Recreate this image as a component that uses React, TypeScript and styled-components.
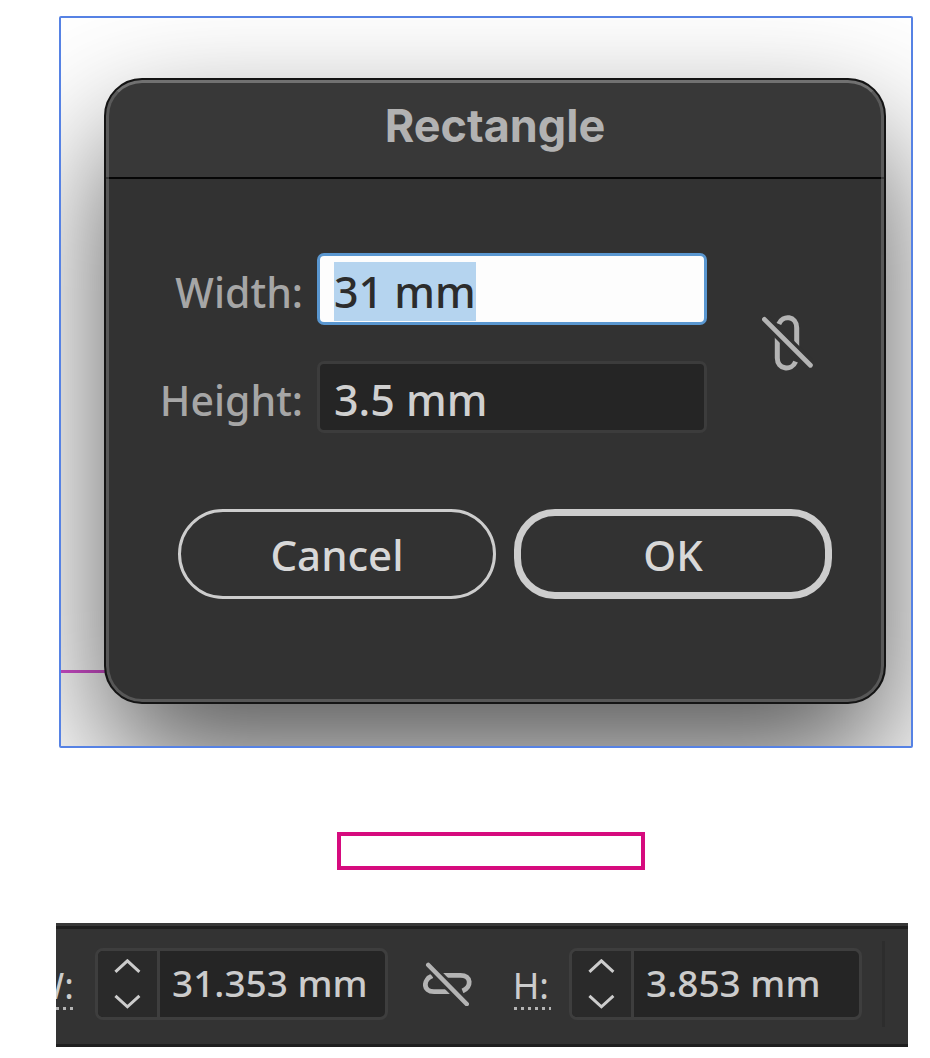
import React, { useEffect, useRef } from 'react';
import styled, { createGlobalStyle } from 'styled-components';

const GlobalStyle = createGlobalStyle`
  * { box-sizing: border-box; }
  body {
    margin: 0;
    background: #ffffff;
    font-family: 'Noto Sans', 'Open Sans', sans-serif;
  }
  button, input { font-family: inherit; margin: 0; }
`;

const Page = styled.main`
  display: flex;
  flex-direction: column;
  padding-top: 16px;
`;

const Frame = styled.section`
  position: relative;
  overflow: hidden;
  margin: 0 17px 0 59px;
  padding: 60px 25px 42px 43px;
  border: 2px solid #5682e4;
  border-radius: 2px;
  background: #ffffff;
`;

const GuideLine = styled.div`
  position: absolute;
  left: 0;
  bottom: 73px;
  width: 80px;
  height: 3px;
  background: #d44fd0;
`;

const Dialog = styled.form`
  position: relative;
  overflow: hidden;
  border: 2px solid #141414;
  border-radius: 38px;
  background: #323232;
  box-shadow: 0 60px 130px rgba(0, 0, 0, 0.66);

  &::after {
    content: '';
    position: absolute;
    inset: 0;
    border: 3px solid rgba(145, 145, 145, 0.4);
    border-top-color: rgba(170, 170, 170, 0.5);
    border-radius: 36px;
    pointer-events: none;
  }
`;

const TitleBar = styled.header`
  display: flex;
  align-items: center;
  justify-content: center;
  height: 99px;
  padding-bottom: 6px;
  border-bottom: 2px solid #060606;
  background: #383838;
`;

const Title = styled.h1`
  margin: 0;
  font-family: Inter, sans-serif;
  font-size: 45px;
  line-height: 52px;
  font-weight: 700;
  color: #b2b2b2;
`;

const Fields = styled.div`
  display: flex;
  align-items: center;
  gap: 55px;
  padding: 74px 71px 0 55px;
`;

const FieldColumn = styled.div`
  display: flex;
  flex: 1;
  flex-direction: column;
  gap: 36px;
`;

const Field = styled.div`
  display: grid;
  grid-template-columns: 142px minmax(0, 1fr);
  align-items: center;
  gap: 14px;
`;

const FieldLabel = styled.label`
  justify-self: end;
  padding-top: 6px;
  font-size: 41px;
  line-height: 52px;
  font-weight: 500;
  white-space: nowrap;
  color: #a6a6a6;
`;

const FieldInput = styled.input<{ $active?: boolean }>`
  width: 100%;
  height: 72px;
  padding: 9px 14px 5px;
  border: 3px solid ${(p) => (p.$active ? '#5a97d0' : '#3c3c3c')};
  border-radius: 7px;
  outline: none;
  background: ${(p) => (p.$active ? '#fdfdfd' : '#252525')};
  color: ${(p) => (p.$active ? '#2c2c2c' : '#d0d0d0')};
  font-size: 43px;
  line-height: 52px;
  font-weight: 500;

  &::selection {
    background: #b5d4ef;
    color: #2c2c2c;
  }
`;

const IconButton = styled.button`
  display: flex;
  flex: none;
  padding: 0;
  border: 0;
  background: none;
  color: #b4b4b4;
`;

const Actions = styled.div`
  display: grid;
  grid-template-columns: 1fr 1fr;
  gap: 18px;
  padding: 76px 52px 103px 72px;
`;

const ActionButton = styled.button<{ $primary?: boolean }>`
  height: 90px;
  padding: 2px 0 0;
  border: ${(p) => (p.$primary ? 7 : 3)}px solid #cdcdcd;
  border-radius: ${(p) => (p.$primary ? 41 : 45)}px;
  background: transparent;
  color: #d8d8d8;
  font-size: 42px;
  line-height: 52px;
  font-weight: 500;
`;

const Artboard = styled.div`
  display: flex;
  justify-content: center;
  padding: 84px 0 53px 52px;
`;

const DrawnRectangle = styled.div`
  width: 308px;
  height: 38px;
  border: 4px solid #d60b7e;
`;

const Toolbar = styled.section`
  display: flex;
  align-items: center;
  overflow: hidden;
  height: 124px;
  margin: 0 22px 11px 56px;
  padding: 0 23px 2px 0;
  background: linear-gradient(#383838 3px, #1f1f1f 3px, #1f1f1f 6px, transparent 6px),
    linear-gradient(to top, #1f1f1f 3px, #333333 3px);
`;

const ToolLabel = styled.label<{ $clipped?: boolean }>`
  display: flex;
  flex: none;
  justify-content: flex-end;
  width: ${(p) => (p.$clipped ? 20 : 37)}px;
  height: 44px;
  margin: 8px 0 0 ${(p) => (p.$clipped ? 0 : 42)}px;
  padding-right: 2px;
  background: repeating-linear-gradient(to right, #b4b4b4 0 3px, transparent 3px 7px) left bottom / 100% 3px
    no-repeat;
  font-size: 36px;
  line-height: 40px;
  color: #cccccc;
`;

const Spinner = styled.div<{ $left: number; $right: number }>`
  display: flex;
  flex: 1;
  overflow: hidden;
  height: 72px;
  margin: 0 ${(p) => p.$right}px 0 ${(p) => p.$left}px;
  border: 3px solid #3e3e3e;
  border-radius: 8px;
  background: #252525;
`;

const Stepper = styled.div`
  display: flex;
  flex: none;
  flex-direction: column;
  justify-content: space-between;
  width: 62px;
  border-right: 3px solid #3e3e3e;
  background: #2a2a2a;
`;

const StepButton = styled.button`
  display: flex;
  align-items: center;
  justify-content: center;
  height: 31px;
  padding: 0;
  border: 0;
  background: none;
  color: #cccccc;
`;

const SpinnerInput = styled.input`
  flex: 1;
  min-width: 0;
  padding: 0 12px 2px;
  border: 0;
  outline: none;
  background: transparent;
  color: #cccccc;
  font-size: 37px;
  line-height: 52px;
  font-weight: 500;
`;

const Separator = styled.div`
  flex: none;
  width: 3px;
  height: 86px;
  background: #2d2d2d;
`;

const UnlinkVertical = () => (
  <svg width="51" height="56" viewBox="0 0 51 56" fill="none" aria-hidden="true">
    <g stroke="currentColor" strokeWidth="5">
      <path d="M16.8 9 C20.5 -0.5 34.7 0.8 34.7 12.8 V32" />
      <path d="M15.3 21 V43 C15.3 54.5 29.5 56.5 33.6 46.6" />
    </g>
    <path d="M2.4 4.4 L48.4 50.2" stroke="#323232" strokeWidth="11.5" />
    <path d="M2.4 4.4 L48.4 50.2" stroke="currentColor" strokeWidth="4.8" strokeLinecap="round" />
  </svg>
);

const UnlinkHorizontal = () => (
  <svg width="49" height="44" viewBox="0 0 49 44" fill="none" aria-hidden="true">
    <g stroke="currentColor" strokeWidth="4.8">
      <path d="M16 13.3 H37.5 C48.5 13.3 49 25 39.5 29" />
      <path d="M9.3 13.8 C0 17.5 -0.5 29.7 11 29.7 H32" />
    </g>
    <path d="M5.3 3 L43.7 42" stroke="#333333" strokeWidth="10" />
    <path d="M5.3 3 L43.7 42" stroke="currentColor" strokeWidth="4.6" strokeLinecap="round" />
  </svg>
);

const Chevron = ({ up }: { up?: boolean }) => (
  <svg width="28" height="16" viewBox="0 0 28 16" fill="none" aria-hidden="true">
    <path d={up ? 'M1.4 12.8 L13.4 1.8 L25.4 12.8' : 'M1.4 1.8 L13.4 12.8 L25.4 1.8'} stroke="currentColor" strokeWidth="3" />
  </svg>
);

type NumberSpinnerProps = { id: string; value: string; left: number; right: number };

const NumberSpinner = ({ id, value, left, right }: NumberSpinnerProps) => (
  <Spinner $left={left} $right={right}>
    <Stepper>
      <StepButton type="button" aria-label="Increase">
        <Chevron up />
      </StepButton>
      <StepButton type="button" aria-label="Decrease">
        <Chevron />
      </StepButton>
    </Stepper>
    <SpinnerInput id={id} defaultValue={value} />
  </Spinner>
);

export default function App() {
  const widthRef = useRef<HTMLInputElement>(null);

  useEffect(() => {
    widthRef.current?.focus();
    widthRef.current?.select();
  }, []);

  return (
    <>
      <GlobalStyle />
      <Page>
        <Frame>
          <GuideLine />
          <Dialog onSubmit={(e) => e.preventDefault()}>
            <TitleBar>
              <Title>Rectangle</Title>
            </TitleBar>
            <Fields>
              <FieldColumn>
                <Field>
                  <FieldLabel htmlFor="rect-width">Width:</FieldLabel>
                  <FieldInput id="rect-width" ref={widthRef} $active defaultValue="31 mm" />
                </Field>
                <Field>
                  <FieldLabel htmlFor="rect-height">Height:</FieldLabel>
                  <FieldInput id="rect-height" defaultValue="3.5 mm" />
                </Field>
              </FieldColumn>
              <IconButton type="button" aria-label="Constrain proportions">
                <UnlinkVertical />
              </IconButton>
            </Fields>
            <Actions>
              <ActionButton type="button">Cancel</ActionButton>
              <ActionButton type="submit" $primary>
                OK
              </ActionButton>
            </Actions>
          </Dialog>
        </Frame>
        <Artboard>
          <DrawnRectangle />
        </Artboard>
        <Toolbar>
          <ToolLabel htmlFor="bar-width" $clipped>
            W:
          </ToolLabel>
          <NumberSpinner id="bar-width" value="31.353 mm" left={19} right={35} />
          <IconButton type="button" aria-label="Constrain width and height">
            <UnlinkHorizontal />
          </IconButton>
          <ToolLabel htmlFor="bar-height">H:</ToolLabel>
          <NumberSpinner id="bar-height" value="3.853 mm" left={18} right={20} />
          <Separator />
        </Toolbar>
      </Page>
    </>
  );
}
